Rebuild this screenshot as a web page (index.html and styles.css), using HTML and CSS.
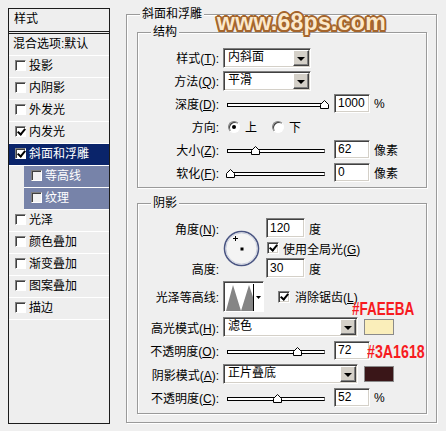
FILE: index.html
```html
<!DOCTYPE html>
<html lang="zh-CN">
<head>
    <meta charset="UTF-8">
    <meta name="viewport" content="width=device-width, initial-scale=1.0">
    <title>图层样式 - 斜面和浮雕</title>
    <link rel="stylesheet" href="styles.css">
</head>
<body>
    <div class="dialog">
        <div class="styles-panel">
            <div class="styles-head">样式</div>
            <ul class="styles-list">
                <li class="blend">混合选项:默认</li>
                <li><span class="cb"></span>投影</li>
                <li><span class="cb"></span>内阴影</li>
                <li><span class="cb"></span>外发光</li>
                <li><span class="cb checked"></span>内发光</li>
                <li class="selected"><span class="cb checked"></span>斜面和浮雕</li>
                <li class="sub"><span class="cb"></span>等高线</li>
                <li class="sub"><span class="cb"></span>纹理</li>
                <li><span class="cb"></span>光泽</li>
                <li><span class="cb"></span>颜色叠加</li>
                <li><span class="cb"></span>渐变叠加</li>
                <li><span class="cb"></span>图案叠加</li>
                <li><span class="cb"></span>描边</li>
            </ul>
        </div>

        <div class="group bevel-group">
            <span class="group-title">斜面和浮雕</span>

            <div class="group structure">
                <span class="group-title">结构</span>
                <div class="field">
                    <span class="field-label">样式(<u>T</u>):</span>
                    <div class="select"><span class="select-value">内斜面</span><span class="select-btn"></span></div>
                </div>
                <div class="field">
                    <span class="field-label">方法(<u>Q</u>):</span>
                    <div class="select"><span class="select-value">平滑</span><span class="select-btn"></span></div>
                </div>
                <div class="field">
                    <span class="field-label">深度(<u>D</u>):</span>
                    <div class="slider">
                        <div class="slider-track"></div>
                        <span class="slider-thumb" style="left: 100%"><svg width="9" height="9" viewBox="0 0 9 9"><polygon points="0.5,8.5 0.5,4.5 4.5,0.5 8.5,4.5 8.5,8.5" fill="#fff" stroke="#000"/></svg></span>
                    </div>
                    <span class="num">1000</span>
                    <span class="unit">%</span>
                </div>
                <div class="field">
                    <span class="field-label">方向:</span>
                    <span class="radio checked"></span><span class="radio-text">上</span>
                    <span class="radio second"></span><span class="radio-text">下</span>
                </div>
                <div class="field">
                    <span class="field-label">大小(<u>Z</u>):</span>
                    <div class="slider">
                        <div class="slider-track"></div>
                        <span class="slider-thumb" style="left: 30%"><svg width="9" height="9" viewBox="0 0 9 9"><polygon points="0.5,8.5 0.5,4.5 4.5,0.5 8.5,4.5 8.5,8.5" fill="#fff" stroke="#000"/></svg></span>
                    </div>
                    <span class="num">62</span>
                    <span class="unit">像素</span>
                </div>
                <div class="field">
                    <span class="field-label">软化(<u>F</u>):</span>
                    <div class="slider">
                        <div class="slider-track"></div>
                        <span class="slider-thumb" style="left: 4%"><svg width="9" height="9" viewBox="0 0 9 9"><polygon points="0.5,8.5 0.5,4.5 4.5,0.5 8.5,4.5 8.5,8.5" fill="#fff" stroke="#000"/></svg></span>
                    </div>
                    <span class="num">0</span>
                    <span class="unit">像素</span>
                </div>
            </div>

            <div class="group shadow">
                <span class="group-title">阴影</span>
                <div class="angle-grid">
                    <span class="field-label">角度(<u>N</u>):</span>
                    <div class="angle-dial">
                        <svg width="37" height="37" viewBox="0 0 37 37">
                            <circle cx="18.5" cy="18.5" r="17" fill="#f4f4f4" stroke="#4a5582" stroke-width="1.6"/>
                            <circle cx="18.5" cy="18.5" r="15.6" fill="none" stroke="#c9cedd" stroke-width="1"/>
                            <path d="M12.5 6v5M10 8.5h5" stroke="#000" stroke-width="1"/>
                            <rect x="17.5" y="17.5" width="3" height="3" fill="#000"/>
                        </svg>
                    </div>
                    <div class="inline">
                        <span class="num angle">120</span>
                        <span class="unit">度</span>
                    </div>
                    <div class="inline global-light">
                        <span class="check checked"></span>
                        <span class="check-text">使用全局光(<u>G</u>)</span>
                    </div>
                    <span class="field-label altitude-label">高度:</span>
                    <div class="inline altitude">
                        <span class="num angle">30</span>
                        <span class="unit">度</span>
                    </div>
                </div>

                <div class="field contour-row">
                    <span class="field-label">光泽等高线:</span>
                    <div class="contour-box">
                        <svg width="37" height="27" viewBox="0 0 37 27">
                            <polygon points="0,27 7,1 15,27 23,1 27,13 27,27" fill="#858585"/>
                            <line x1="27.5" y1="0" x2="27.5" y2="27" stroke="#000"/>
                            <polygon points="30,12 35,12 32.5,15" fill="#000"/>
                        </svg>
                    </div>
                    <span class="check checked antialias"></span>
                    <span class="check-text">消除锯齿(<u>L</u>)</span>
                </div>

                <div class="field mode-row">
                    <span class="field-label">高光模式(<u>H</u>):</span>
                    <div class="select wide"><span class="select-value">滤色</span><span class="select-btn"></span></div>
                    <span class="swatch light"></span>
                </div>
                <div class="field">
                    <span class="field-label">不透明度(<u>O</u>):</span>
                    <div class="slider">
                        <div class="slider-track"></div>
                        <span class="slider-thumb" style="left: 72%"><svg width="9" height="9" viewBox="0 0 9 9"><polygon points="0.5,8.5 0.5,4.5 4.5,0.5 8.5,4.5 8.5,8.5" fill="#fff" stroke="#000"/></svg></span>
                    </div>
                    <span class="num">72</span>
                </div>
                <div class="field mode-row">
                    <span class="field-label">阴影模式(<u>A</u>):</span>
                    <div class="select wide"><span class="select-value">正片叠底</span><span class="select-btn"></span></div>
                    <span class="swatch dark"></span>
                </div>
                <div class="field">
                    <span class="field-label">不透明度(<u>C</u>):</span>
                    <div class="slider">
                        <div class="slider-track"></div>
                        <span class="slider-thumb" style="left: 52%"><svg width="9" height="9" viewBox="0 0 9 9"><polygon points="0.5,8.5 0.5,4.5 4.5,0.5 8.5,4.5 8.5,8.5" fill="#fff" stroke="#000"/></svg></span>
                    </div>
                    <span class="num">52</span>
                    <span class="unit">%</span>
                </div>
            </div>
        </div>

        <!-- watermark and colour notes painted over the screenshot -->
        <div class="watermark">www.68ps.com</div>
        <div class="note note-light">#FAEEBA</div>
        <div class="note note-dark">#3A1618</div>
    </div>
</body>
</html>
```

FILE: styles.css
```css
* {
    box-sizing: border-box;
}
body {
    margin: 0;
    background-color: #efefef;
    font-family: "Liberation Sans", "Noto Sans CJK SC", sans-serif;
    font-size: 12px;
    color: #000;
}
.dialog {
    position: relative;
    display: flex;
    align-items: flex-start;
    width: 446px;
    height: 431px;
    padding: 8px 0 0 8px;
    overflow: hidden;
}

/* left list of styles */
.styles-panel {
    flex: none;
    width: 102px;
    height: 416px;
    border: 1px solid #1c1c1c;
    background-color: #eeeeee;
}
.styles-head {
    height: 23px;
    line-height: 21px;
    padding-left: 5px;
    border-bottom: 1px solid #1c1c1c;
    margin-bottom: 1px;
}
.styles-list {
    list-style: none;
    margin: 0;
    padding: 0;
    border-top: 1px solid #1c1c1c;
}
.styles-list li {
    display: flex;
    align-items: center;
    gap: 3px;
    height: 22px;
    line-height: 18px;
    padding: 0 0 2px 6px;
    border-bottom: 1px solid #fff;
    white-space: nowrap;
}
.styles-list li.blend {
    padding-left: 4px;
}
.styles-list li.selected {
    background-color: #0a246a;
    color: #fff;
}
.styles-list li.sub {
    margin-left: 15px;
    padding-left: 7px;
    background-color: #7783a9;
    color: #fff;
}
.cb {
    position: relative;
    flex: none;
    width: 11px;
    height: 11px;
    background-color: #fff;
    border: 1px solid;
    border-color: #808080 #fff #fff #808080;
    box-shadow: inset 1px 1px 0 #404040;
}
.sub .cb {
    background-color: #f2f2f2;
}
.cb.checked::after,
.check.checked::after {
    content: "";
    position: absolute;
    left: 3px;
    top: 0;
    width: 3px;
    height: 6px;
    border: solid #000;
    border-width: 0 2px 2px 0;
    transform: rotate(40deg);
}

/* group boxes */
.group {
    position: relative;
    border: 1px solid #9a9a9a;
    box-shadow: 1px 1px 0 #fff, inset 1px 1px 0 #fff;
}
.group-title {
    position: absolute;
    top: -8px;
    left: 13px;
    padding: 0 2px;
    line-height: 14px;
    background-color: #efefef;
}
.bevel-group {
    flex: none;
    width: 311px;
    height: 409px;
    margin: 6px 0 0 16px;
    padding: 17px 0 0 10px;
}
.structure {
    width: 290px;
    height: 156px;
    padding-top: 13px;
}
.shadow {
    width: 290px;
    height: 211px;
    margin-top: 15px;
    padding-top: 14px;
}

/* rows */
.field {
    display: flex;
    align-items: center;
    height: 23px;
    white-space: nowrap;
}
.field-label {
    flex: none;
    width: 81px;
    text-align: right;
    white-space: nowrap;
}
.select {
    display: flex;
    width: 88px;
    height: 20px;
    margin-left: 4px;
    background-color: #fff;
    border: 1px solid;
    border-color: #808080 #fff #fff #808080;
    box-shadow: inset 1px 1px 0 #404040, inset -1px -1px 0 #d4d0c8;
}
.select.wide {
    width: 135px;
}
.select-value {
    flex: 1;
    padding-left: 4px;
    line-height: 17px;
}
.select-btn {
    position: relative;
    flex: none;
    width: 16px;
    margin: 1px;
    background-color: #d4d0c8;
    border: 1px solid;
    border-color: #fff #404040 #404040 #fff;
    box-shadow: inset -1px -1px 0 #808080;
}
.select-btn::after {
    content: "";
    position: absolute;
    left: 3px;
    top: 6px;
    border-left: 4px solid transparent;
    border-right: 4px solid transparent;
    border-top: 4px solid #000;
}
.slider {
    position: relative;
    flex: none;
    width: 98px;
    height: 10px;
    margin-left: 8px;
}
.slider-track {
    height: 4px;
    margin-top: 4px;
    background-color: #fff;
    border: 1px solid #000;
    border-right-color: #777;
}
.slider-thumb {
    position: absolute;
    top: 1px;
    width: 9px;
    height: 9px;
    margin-left: -5px;
    line-height: 0;
}
.num {
    flex: none;
    width: 36px;
    height: 19px;
    margin-left: 9px;
    padding-left: 3px;
    line-height: 17px;
    background-color: #fff;
    border: 1px solid;
    border-color: #808080 #fff #fff #808080;
    box-shadow: inset 1px 1px 0 #404040, inset -1px -1px 0 #d4d0c8;
}
.num.angle {
    width: 39px;
    height: 20px;
    margin-left: 0;
    line-height: 18px;
}
.unit {
    margin-left: 4px;
}
.radio {
    position: relative;
    flex: none;
    width: 12px;
    height: 12px;
    margin-left: 9px;
    border-radius: 50%;
    background-color: #fff;
    border: 1px solid;
    border-color: #808080 #fff #fff #808080;
    box-shadow: inset 1px 1px 0 #404040;
}
.radio.second {
    margin-left: 15px;
}
.radio.checked::after {
    content: "";
    position: absolute;
    left: 3px;
    top: 3px;
    width: 4px;
    height: 4px;
    border-radius: 50%;
    background-color: #000;
}
.radio-text {
    margin-left: 5px;
}

/* angle block */
.angle-grid {
    display: grid;
    grid-template-columns: 81px 47px auto;
    grid-template-rows: 20px 20px 20px;
    align-items: center;
}
.angle-dial {
    grid-column: 2;
    grid-row: 1 / 4;
    margin-left: 4px;
    line-height: 0;
}
.inline {
    display: flex;
    align-items: center;
    white-space: nowrap;
}
.global-light {
    grid-column: 3;
    grid-row: 2;
}
.altitude-label {
    grid-column: 1;
    grid-row: 3;
}
.altitude {
    grid-column: 3;
    grid-row: 3;
}
.check {
    position: relative;
    flex: none;
    width: 12px;
    height: 12px;
    margin-left: 1px;
    background-color: #fff;
    border: 1px solid;
    border-color: #808080 #fff #fff #808080;
    box-shadow: inset 1px 1px 0 #404040, inset -1px -1px 0 #d4d0c8;
}
.check-text {
    margin-left: 4px;
}
.contour-row {
    height: 31px;
    margin-top: 3px;
    margin-bottom: 3px;
}
.contour-box {
    flex: none;
    width: 41px;
    height: 31px;
    margin-left: 4px;
    padding: 2px 0 0 2px;
    line-height: 0;
    background-color: #fff;
    border: 1px solid;
    border-color: #808080 #fff #fff #808080;
    box-shadow: inset 1px 1px 0 #404040;
}
.check.antialias {
    margin-left: 14px;
}
.contour-row .check-text {
    margin-left: 5px;
}
.mode-row {
    height: 24px;
}
.swatch {
    flex: none;
    width: 30px;
    height: 16px;
    margin-left: 6px;
    border: 1px solid #8a8a8a;
}
.swatch.light {
    background-color: #faeeba;
}
.swatch.dark {
    background-color: #3a1618;
}

/* painted-on labels */
.watermark {
    position: absolute;
    left: 217px;
    top: 11px;
    font-size: 23px;
    line-height: 23px;
    font-weight: bold;
    letter-spacing: 0.3px;
    color: #fbe9cc;
    text-shadow: 2px 0 0 #a5652c, -2px 0 0 #a5652c, 0 2px 0 #a5652c, 0 -2px 0 #a5652c,
        1.5px 1.5px 0 #a5652c, -1.5px 1.5px 0 #a5652c, 1.5px -1.5px 0 #a5652c, -1.5px -1.5px 0 #a5652c;
}
.note {
    position: absolute;
    font-weight: bold;
    color: #f71b1f;
    transform-origin: left top;
    white-space: nowrap;
}
.note-light {
    left: 352px;
    top: 299px;
    font-size: 19px;
    line-height: 19px;
    transform: scaleX(0.71);
}
.note-dark {
    left: 367px;
    top: 343px;
    font-size: 18px;
    line-height: 18px;
    transform: scaleX(0.79);
}
```
